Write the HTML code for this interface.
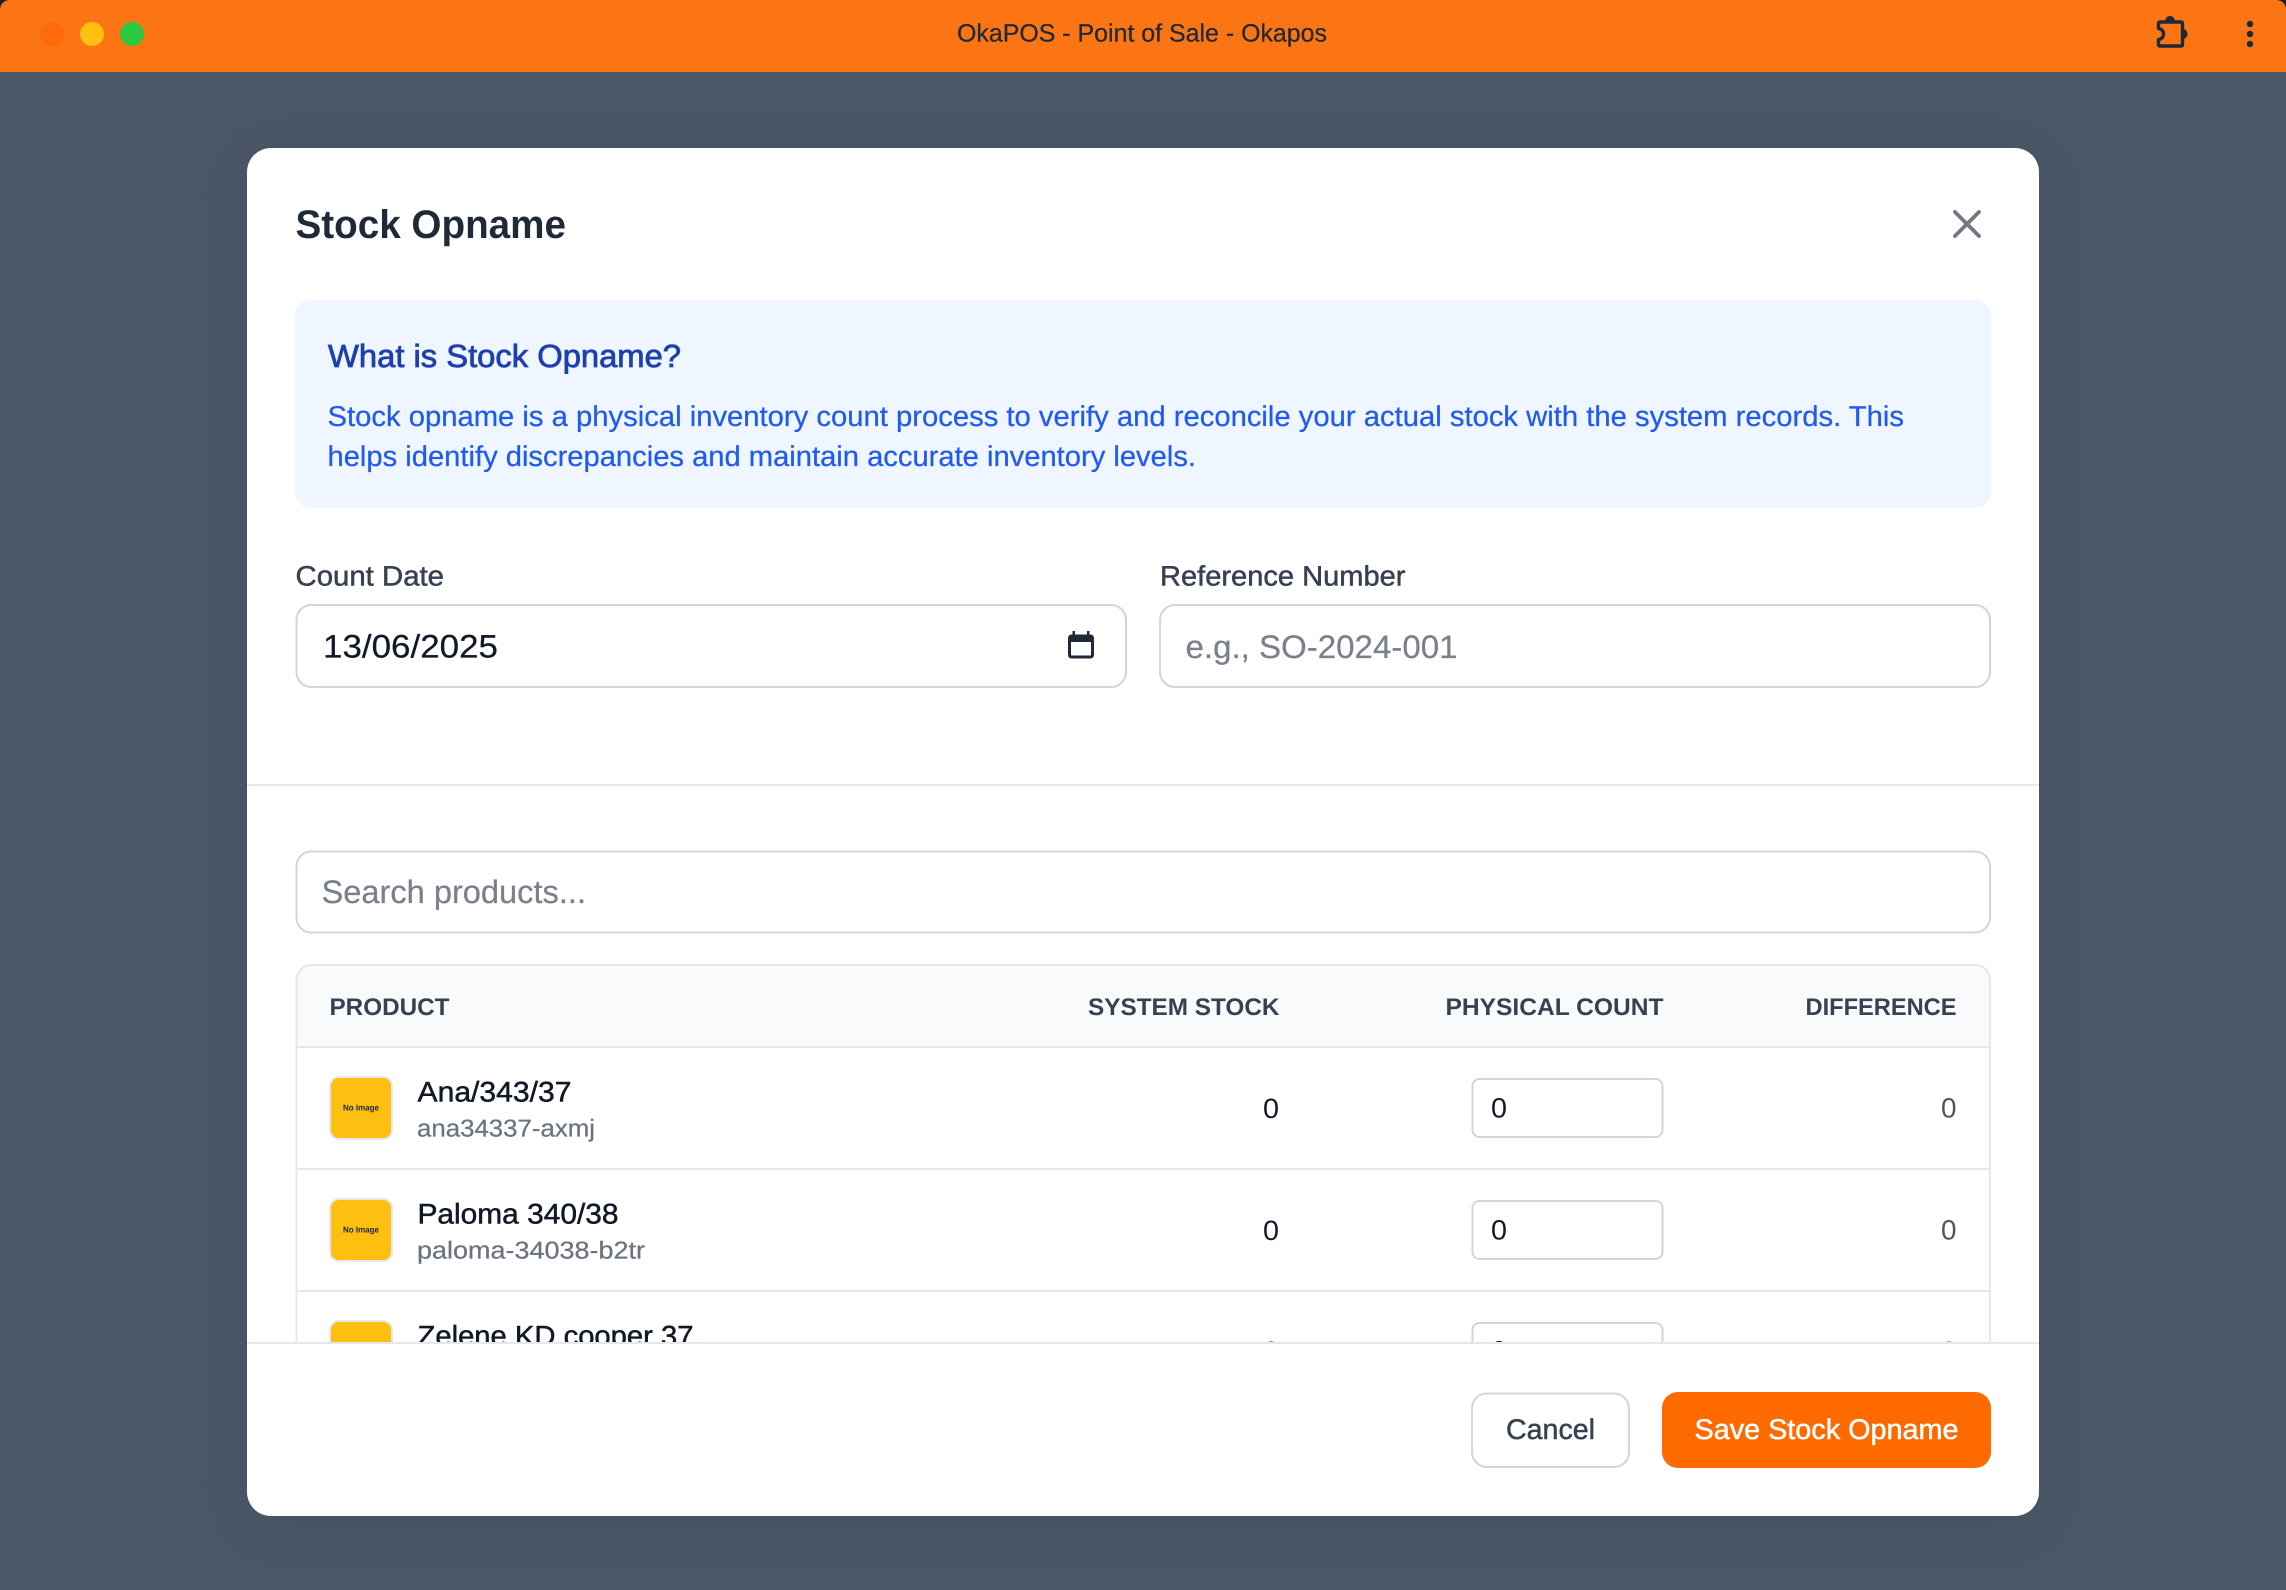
<!DOCTYPE html>
<html lang="en">
<head>
<meta charset="utf-8">
<title>OkaPOS - Point of Sale - Okapos</title>
<style>
html,body{margin:0;padding:0;width:2286px;height:1590px;overflow:hidden;background:#4b5767}
svg{display:block}
text{font-family:"Liberation Sans",Arial,sans-serif;text-rendering:geometricPrecision}
.b{font-weight:700}
.l{stroke-width:.25px}
.m{stroke-width:.5px}
.s{stroke-width:.8px}
.f{fill:#fff;stroke:#d1d5e0;stroke-width:2}
</style>
</head>
<body>
<svg xmlns="http://www.w3.org/2000/svg" width="2286" height="1590" viewBox="0 0 2286 1590">
<defs>
<filter id="sh" x="-10%" y="-10%" width="120%" height="120%"><feGaussianBlur stdDeviation="30"/></filter>
<clipPath id="scroll"><rect x="247" y="790" width="1792" height="552"/></clipPath>
</defs>

<!-- window -->
<rect width="2286" height="1590" fill="#4b5767"/>
<rect width="2286" height="72" fill="#fb7515"/>
<path d="M0 0H9Q1 1 0 9Z" fill="#1a1f2b"/>
<path d="M2286 0H2277Q2285 1 2286 9Z" fill="#1a1f2b"/>
<circle cx="52" cy="34" r="12" fill="#ff6a0a"/>
<circle cx="92" cy="34" r="12" fill="#ffc010"/>
<circle cx="132" cy="34" r="12" fill="#2bc840"/>
<text class="l" x="957" y="41.5" font-size="25" textLength="370" lengthAdjust="spacingAndGlyphs" fill="#1f2937" stroke="#1f2937">OkaPOS - Point of Sale - Okapos</text>

<!-- puzzle icon -->
<path d="M2160 22H2180.5Q2182.5 22 2182.5 24V44.5Q2182.5 46 2181 46H2160Q2158.5 46 2158.5 44.5V39.5C2162 39 2163.5 36.5 2163.5 34C2163.5 31.5 2162 29 2158.5 28.5V24Q2158.5 22 2160 22Z" fill="none" stroke="#1f2937" stroke-width="3.4" stroke-linejoin="round"/>
<path d="M2165 21.5a5 5.5 0 0 1 10 0z" fill="#1f2937"/>
<path d="M2183 29a4.5 5 0 0 1 0 10z" fill="#1f2937"/>
<!-- kebab -->
<circle cx="2250" cy="24" r="3.2" fill="#1f2937"/>
<circle cx="2250" cy="34" r="3.2" fill="#1f2937"/>
<circle cx="2250" cy="44" r="3.2" fill="#1f2937"/>

<!-- modal -->
<rect x="247" y="158" width="1792" height="1368" rx="24" fill="#000" opacity=".07" filter="url(#sh)"/>
<rect x="247" y="148" width="1792" height="1368" rx="24" fill="#fff"/>

<text class="b" x="295.5" y="238" font-size="40" textLength="270.5" lengthAdjust="spacingAndGlyphs" fill="#1f2937">Stock Opname</text>
<path d="M1955 212L1979 236M1979 212L1955 236" stroke="#717783" stroke-width="3.8" stroke-linecap="round" fill="none"/>

<!-- info box -->
<rect x="295" y="300" width="1696" height="208" rx="16" fill="#eff6ff"/>
<text class="s" x="328" y="367" font-size="32" textLength="353" lengthAdjust="spacingAndGlyphs" fill="#1e40af" stroke="#1e40af">What is Stock Opname?</text>
<text class="l" x="327.5" y="426" font-size="28.6" textLength="1576.5" lengthAdjust="spacingAndGlyphs" fill="#1f5bf2" stroke="#1f5bf2">Stock opname is a physical inventory count process to verify and reconcile your actual stock with the system records. This</text>
<text class="l" x="327.5" y="466" font-size="28.6" textLength="868.5" lengthAdjust="spacingAndGlyphs" fill="#1f5bf2" stroke="#1f5bf2">helps identify discrepancies and maintain accurate inventory levels.</text>

<!-- form -->
<text class="m" x="295.5" y="585.5" font-size="28" textLength="148.5" lengthAdjust="spacingAndGlyphs" fill="#374151" stroke="#374151">Count Date</text>
<rect class="f" x="296.5" y="605" width="829.5" height="82" rx="15"/>
<text class="l" x="323" y="657.5" font-size="32.5" textLength="175" lengthAdjust="spacingAndGlyphs" fill="#111827" stroke="#111827">13/06/2025</text>
<!-- calendar icon -->
<rect x="1069.5" y="636" width="23" height="21" rx="2" fill="#fff" stroke="#1f2937" stroke-width="3"/>
<rect x="1069" y="635" width="24" height="7" rx="1.5" fill="#1f2937"/>
<rect x="1072.5" y="631" width="2.5" height="5" fill="#1f2937"/>
<rect x="1087" y="631" width="2.5" height="5" fill="#1f2937"/>

<text class="m" x="1160" y="585.5" font-size="28" textLength="245.5" lengthAdjust="spacingAndGlyphs" fill="#374151" stroke="#374151">Reference Number</text>
<rect class="f" x="1160" y="605" width="830" height="82" rx="15"/>
<text class="l" x="1185.5" y="658" font-size="32.5" textLength="272" lengthAdjust="spacingAndGlyphs" fill="#7b818c" stroke="#7b818c">e.g., SO-2024-001</text>

<rect x="247" y="784" width="1792" height="2" fill="#e5e7eb"/>

<rect class="f" x="296.5" y="851.5" width="1693.5" height="81" rx="15"/>
<text class="l" x="321.5" y="903" font-size="32.5" textLength="264.5" lengthAdjust="spacingAndGlyphs" fill="#7b818c" stroke="#7b818c">Search products...</text>

<!-- table -->
<g clip-path="url(#scroll)">
<path d="M296 1046V981Q296 965 312 965H1975Q1991 965 1991 981V1046Z" fill="#f9fafb"/>
<rect x="296.5" y="965" width="1693.5" height="500" rx="15" fill="none" stroke="#e5e7eb" stroke-width="2"/>
<rect x="296" y="1046" width="1695" height="2" fill="#e5e7eb"/>
<rect x="296" y="1168" width="1695" height="2" fill="#e5e7eb"/>
<rect x="296" y="1290" width="1695" height="2" fill="#e5e7eb"/>

<text class="b" x="329.5" y="1015" font-size="24" textLength="120" lengthAdjust="spacingAndGlyphs" fill="#374151">PRODUCT</text>
<text class="b" x="1088" y="1015" font-size="24" textLength="191.5" lengthAdjust="spacingAndGlyphs" fill="#374151">SYSTEM STOCK</text>
<text class="b" x="1445.5" y="1015" font-size="24" textLength="218" lengthAdjust="spacingAndGlyphs" fill="#374151">PHYSICAL COUNT</text>
<text class="b" x="1805.5" y="1015" font-size="24" textLength="151" lengthAdjust="spacingAndGlyphs" fill="#374151">DIFFERENCE</text>

<!-- row 1 -->
<rect x="330" y="1077" width="62" height="62" rx="9" fill="#fdbf10" stroke="#e5e7eb" stroke-width="2"/>
<text class="b" x="343" y="1110.5" font-size="8.5" textLength="36" lengthAdjust="spacingAndGlyphs" fill="#1f2a44">No Image</text>
<text class="m" x="417.5" y="1101.5" font-size="28.4" textLength="154" lengthAdjust="spacingAndGlyphs" fill="#111827" stroke="#111827">Ana/343/37</text>
<text class="l" x="417" y="1136.5" font-size="24.4" textLength="178" lengthAdjust="spacingAndGlyphs" fill="#6b7280" stroke="#6b7280">ana34337-axmj</text>
<text x="1263" y="1118" font-size="28" textLength="16" lengthAdjust="spacingAndGlyphs" fill="#111827">0</text>
<rect class="f" x="1472.5" y="1079" width="190" height="58" rx="7"/>
<text x="1491" y="1117.5" font-size="28" textLength="16" lengthAdjust="spacingAndGlyphs" fill="#111827">0</text>
<text x="1941" y="1117.5" font-size="28" textLength="15.5" lengthAdjust="spacingAndGlyphs" fill="#4b5563">0</text>

<!-- row 2 -->
<rect x="330" y="1199" width="62" height="62" rx="9" fill="#fdbf10" stroke="#e5e7eb" stroke-width="2"/>
<text class="b" x="343" y="1232.5" font-size="8.5" textLength="36" lengthAdjust="spacingAndGlyphs" fill="#1f2a44">No Image</text>
<text class="m" x="417.5" y="1223.5" font-size="28.4" textLength="201" lengthAdjust="spacingAndGlyphs" fill="#111827" stroke="#111827">Paloma 340/38</text>
<text class="l" x="417" y="1258.5" font-size="24.4" textLength="228" lengthAdjust="spacingAndGlyphs" fill="#6b7280" stroke="#6b7280">paloma-34038-b2tr</text>
<text x="1263" y="1240" font-size="28" textLength="16" lengthAdjust="spacingAndGlyphs" fill="#111827">0</text>
<rect class="f" x="1472.5" y="1201" width="190" height="58" rx="7"/>
<text x="1491" y="1239.5" font-size="28" textLength="16" lengthAdjust="spacingAndGlyphs" fill="#111827">0</text>
<text x="1941" y="1239.5" font-size="28" textLength="15.5" lengthAdjust="spacingAndGlyphs" fill="#4b5563">0</text>

<!-- row 3 (clipped) -->
<rect x="330" y="1321" width="62" height="62" rx="9" fill="#fdbf10" stroke="#e5e7eb" stroke-width="2"/>
<text class="m" x="417.5" y="1345.5" font-size="28.4" textLength="276" lengthAdjust="spacingAndGlyphs" fill="#111827" stroke="#111827">Zelene KD cooper 37</text>
<text x="1263" y="1361" font-size="28" textLength="16" lengthAdjust="spacingAndGlyphs" fill="#111827">0</text>
<rect class="f" x="1472.5" y="1323" width="190" height="58" rx="7"/>
<text x="1491" y="1360.5" font-size="28" textLength="16" lengthAdjust="spacingAndGlyphs" fill="#111827">0</text>
<text x="1941" y="1361" font-size="28" textLength="15.5" lengthAdjust="spacingAndGlyphs" fill="#4b5563">0</text>
</g>

<!-- footer -->
<rect x="247" y="1342" width="1792" height="2" fill="#e5e7eb"/>
<rect class="f" x="1472" y="1393.5" width="157" height="73.5" rx="15"/>
<text class="m" x="1506" y="1439" font-size="28.4" textLength="89" lengthAdjust="spacingAndGlyphs" fill="#374151" stroke="#374151">Cancel</text>
<rect x="1662" y="1392" width="329" height="76" rx="16" fill="#ff6a00"/>
<text class="m" x="1694.5" y="1439" font-size="28.4" textLength="264" lengthAdjust="spacingAndGlyphs" fill="#fff" stroke="#fff">Save Stock Opname</text>
</svg>
</body>
</html>
